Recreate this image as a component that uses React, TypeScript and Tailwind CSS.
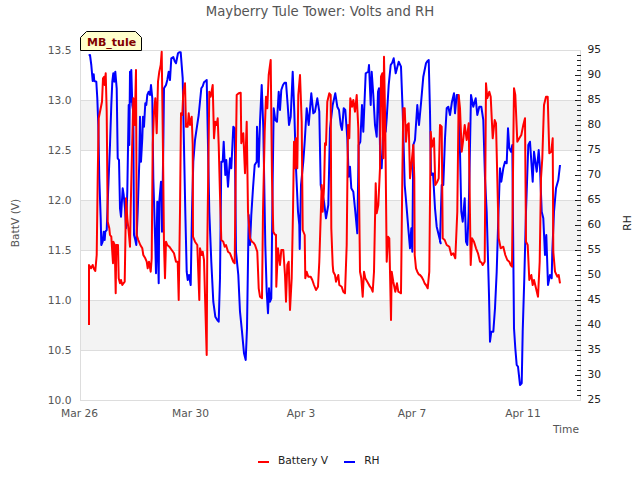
const blueChunks: [number, number[]][] = [
  [80, [26,32,30,30,34,60,38,108,41,88,43,108,49,110,52,160,55,240,58,400,62,520,64,600,68,590,71,560,74,585,76,560,80,555,84,450,88,350,90,300,94,180,97,110,100,85,103,110,106,80,110,130,113,340,117,345,120,490,123,515,128,430,131,450,135,490,138,550,142,440,146,180,148,300,150,80,152,170,154,75,157,180,160,200,162,570,166,585,169,600,173,500,178,350,180,215,183,350,187,280,189,215,192,245,196,175,199,180,202,150,206,140,210,150,213,120,217,160,220,400,226,600,228,685,232,470,234,620,236,715,238,470,243,410,246,560,250,300,252,130,258,120,262,105,266,80,270,105,274,40,280,36,288,55,294,25,302,22,308,100,310,200,316,500,320,680,323,705,327,690,332,720,336,500,340,350,345,285,350,250,356,210,360,170,364,130,372,112]],
  [200, [20,105,24,300,28,500,34,650,40,770,46,815,52,825,56,830,60,700,64,350,68,350,71,290,76,390,79,345,84,425,90,340,94,370,100,245,104,250,108,620,115,690,120,800,126,860,132,925,137,945,141,850,146,510,150,600,154,510,159,430,164,360,170,350,171,245,176,365,180,230,185,120,190,250,196,600,200,740,204,805,207,730,210,770,214,760,218,400,221,190,226,225,231,230,236,140,240,195,244,135,249,120,258,113,263,180,267,240,272,215,278,80,283,200,288,370,294,500,298,540,299,612,303,420,310,350,314,290,320,190,326,240,334,145,340,205,345,200,352,160,358,200,362,420]],
  [320, [12,470,18,520,25,480,30,250,38,180,46,145,52,185,57,195,62,240,66,255,71,190,76,195,82,280,86,395,90,365,94,430,100,440,106,500,112,565,116,300,121,290,126,180,130,260,137,85,145,80,147,60,152,180,155,80,160,150,165,240,170,275,174,140,177,130,181,360,185,370,190,250,197,260,200,220,206,120,212,60,221,40,227,85,236,50,243,65,248,200,254,420,260,490,265,550,270,610,274,550,277,620,280,300,285,285,292,180,297,240,303,175,310,95,318,55,326,45,330,200,333,390,339,385,345,490,350,545,356,570,362,595]],
  [440, [0,590,5,420,10,420,15,280,20,190,25,185,30,210,36,170,42,145,45,205,50,150,55,150,60,320,64,500,68,530,74,460,78,590,82,600,86,500,93,150,100,185,107,160,112,210,118,185,124,185,130,225,135,400,140,500,147,750,150,890,154,860,160,860,165,790,170,680,175,520,180,370,184,410,190,370,195,350,200,355,204,250,208,310,213,320,217,300,222,850,226,910,230,960,234,965,240,1020,245,1015,248,860,253,700,258,500,265,300,270,290,278,410,282,320,290,380,296,315,300,370,305,500,310,520,315,630,319,570,324,720,330,690,335,700,337,620,342,500,348,430,355,405,360,360]],
];
const redChunks: [number, number[]][] = [
  [80, [27,840,27,660,33,670,38,660,42,672,46,678,50,630,53,400,56,220,60,200,63,185,66,170,69,100,73,95,74,120,77,85,80,200,83,530,88,550,90,570,94,575,99,655,100,590,104,600,107,745,109,600,114,600,116,700,120,715,123,705,127,720,134,710,136,600,138,460,142,520,146,560,150,605,152,490,156,320,158,240,160,160,164,240,168,75,170,570,175,585,181,600,187,610,190,630,196,640,200,650,203,670,207,650,212,680,215,640,218,300,222,200,226,160,230,265,234,110,238,80,242,60,245,20,248,250,250,400,252,600,255,700,258,590,262,600,268,605,275,615,282,625,288,650,293,650,296,765,300,500,303,205,307,210,310,140,315,115,318,245,323,245,326,205,330,240,335,215,338,300,339,575,345,590,352,600,358,765,360,610,365,630,368,620,372,645]],
  [200, [20,930,22,600,28,140,32,155,38,120,42,280,46,230,50,240,53,220,56,300,60,450,64,585,70,590,74,605,78,600,84,620,90,625,96,640,104,655,108,300,110,150,116,145,122,143,124,295,130,265,135,385,140,230,144,500,150,580,156,590,165,600,172,620,176,730,180,755,186,760,189,500,194,260,198,155,202,190,206,90,212,45,216,400,220,560,228,570,229,725,234,610,240,660,244,615,250,615,255,690,258,770,262,660,266,650,270,795,275,700,279,500,282,290,285,370,288,280,292,370,295,150,300,90,305,230,308,555,314,570,316,700,320,680,325,695,332,695,337,705,342,720,348,735,354,725,358,650]],
  [320, [5,420,8,500,12,430,15,295,18,300,22,170,28,145,32,150,34,550,38,660,40,680,45,690,48,710,55,690,58,720,65,725,70,740,75,745,80,600,84,240,88,280,91,160,96,185,100,165,105,200,110,150,115,250,120,680,124,700,128,755,132,680,136,700,142,710,150,725,158,740,162,680,167,415,170,505,175,480,180,370,183,95,187,85,190,340,192,35,196,250,200,650,204,575,208,580,213,825,215,680,220,710,226,740,231,715,235,740,243,745,247,400,250,190,254,190,258,290,262,240,266,235,270,400,275,350,280,300,283,400,284,630,288,670,292,680,300,690,310,705,318,720,323,730,328,680,332,260,336,305,342,280,346,420,352,410,356,400,360,240]],
  [440, [5,245,8,580,14,585,20,600,28,605,34,630,40,625,46,640,52,500,56,150,60,190,65,320,69,290,74,240,80,285,86,235,92,660,96,580,102,590,108,610,114,625,120,650,128,660,134,650,138,115,142,160,148,140,152,155,158,280,164,225,168,235,172,400,176,580,182,610,190,605,196,630,202,645,208,650,216,665,220,300,222,130,226,150,232,290,238,280,244,270,250,240,255,220,258,590,263,600,268,705,274,690,278,720,282,705,288,730,294,755,299,650,303,400,307,340,312,180,318,155,323,155,328,325,334,320,338,280,340,620,345,680,352,695,356,690,360,715]],
];

// Low, gently sloped stretches of the series are stair-stepped in the picture.
function toPoints(chunks: [number, number[]][]) {
  const pts: [number, number][] = [];
  for (const [ox, arr] of chunks) {
    for (let i = 0; i < arr.length; i += 2) pts.push([ox + arr[i] / 3, 45 + arr[i + 1] / 3]);
  }
  const out: string[] = [];
  const jitter = [0, 1, -0.5, 1, 0, -1];
  let n = 0;
  pts.forEach(([x, y], i) => {
    if (i > 0) {
      const [px, py] = pts[i - 1];
      const dx = x - px;
      const dy = y - py;
      if (dx >= 2.5 && Math.abs(dy) < 9) {
        const steps = Math.floor(dx / 1.2);
        for (let s = 1; s < steps; s++) {
          const t = s / steps;
          n += 1;
          out.push(`${(px + dx * t).toFixed(1)},${(py + dy * t + jitter[n % 6]).toFixed(1)}`);
        }
      }
    }
    out.push(`${x.toFixed(1)},${y.toFixed(1)}`);
  });
  return out.join(" ");
}

const leftLabels = ["13.5", "13.0", "12.5", "12.0", "11.5", "11.0", "10.5", "10.0"];
const bands = [100, 200, 300];
const xLabels: [string, number][] = [["Mar 26", 79.5], ["Mar 30", 190.5], ["Apr 3", 301], ["Apr 7", 412], ["Apr 11", 523]];

export default function App() {
  const rightTicks = Array.from({ length: 71 }, (_, i) => i);
  return (
    <div className="w-[640px] h-[480px] bg-white flex flex-col font-['DejaVu_Sans',sans-serif] overflow-hidden">
      <div className="h-[22px] pt-[1px] text-center text-[13.25px] leading-[22px] text-[#555555]">
        Mayberry Tule Tower: Volts and RH
      </div>
      <svg width="640" height="428" viewBox="0 22 640 428" className="block">
        {bands.map((y) => (
          <rect key={y} x="81" y={y} width="499" height="50" fill="#f3f3f3" />
        ))}
        {leftLabels.map((l, i) => (
          <line key={l} x1="80" x2="580" y1={50.5 + i * 50} y2={50.5 + i * 50} stroke="#dddddd" strokeWidth="1" />
        ))}
        <line x1="80.5" x2="80.5" y1="50" y2="401" stroke="#dddddd" />
        <line x1="580.5" x2="580.5" y1="50" y2="401" stroke="#dddddd" />
        {rightTicks.map((i) => {
          const y = 50.5 + i * 5;
          const major = i % 5 === 0;
          if (i === 0 || i === 70) return null;
          return <line key={i} x1={major ? 575 : 577} x2="581" y1={y} y2={y} stroke="#222222" />;
        })}
        {leftLabels.map((l, i) => (
          <text key={l} x="71.5" y={53.5 + i * 50} textAnchor="end" className="text-[10.67px] fill-[#555555]">{l}</text>
        ))}
        {Array.from({ length: 15 }, (_, i) => 95 - i * 5).map((v, i) => (
          <text key={v} x="587.5" y={53 + i * 25} className="text-[10.67px] fill-[#222222]">{v}</text>
        ))}
        {xLabels.map(([l, x]) => (
          <text key={l} x={x} y="417" textAnchor="middle" className="text-[10.67px] fill-[#555555]">{l}</text>
        ))}
        <text x="579" y="433" textAnchor="end" className="text-[10.67px] fill-[#555555]">Time</text>
        <text transform="translate(19 223) rotate(-90)" textAnchor="middle" className="text-[10.67px] fill-[#555555]">BattV (V)</text>
        <text transform="translate(631 223) rotate(-90)" textAnchor="middle" className="text-[10.67px] fill-[#222222]">RH</text>
        <polyline points={toPoints(blueChunks)} fill="none" stroke="#0000ff" strokeWidth="2" strokeLinejoin="round" />
        <polyline points={toPoints(redChunks)} fill="none" stroke="#ff0000" strokeWidth="2" strokeLinejoin="round" />
        <path d="M80.5 50.5 V37.5 L86.5 31.5 H135.5 L141.5 37.5 V50.5 Z" fill="#ffffcc" stroke="#000000" />
        <text x="87" y="46" className="text-[11px] font-bold fill-[#800000]">MB_tule</text>
      </svg>
      <div className="flex items-center h-[22px] pl-[258px] text-[10.67px] text-[#222222]">
        <span className="w-[11px] h-[2px] mt-[2px] bg-[#ff0000] mr-[9px]" />
        <span className="mr-[16px]">Battery V</span>
        <span className="w-[11px] h-[2px] mt-[2px] bg-[#0000ff] mr-[9px]" />
        <span>RH</span>
      </div>
    </div>
  );
}
